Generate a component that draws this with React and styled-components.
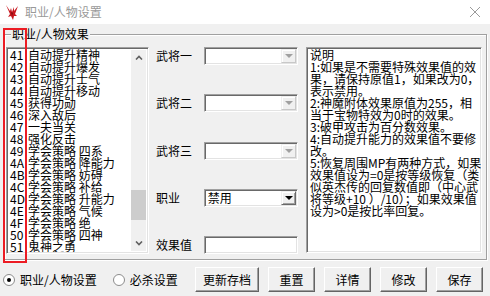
import React from 'react';
import styled, { createGlobalStyle } from 'styled-components';

const GlobalStyle = createGlobalStyle`
  html, body {
    margin: 0;
    padding: 0;
    background: #f0f0f0;
  }
  * {
    box-sizing: border-box;
  }
`;

const Window = styled.div`
  position: relative;
  width: 490px;
  height: 296px;
  background: #f0f0f0;
  display: flex;
  flex-direction: column;
  font-family: "Noto Sans CJK SC", "Liberation Sans", sans-serif;
  font-size: 12px;
  color: #000;
  overflow: hidden;
`;

const TitleBar = styled.div`
  height: 24px;
  background: #fff;
  display: flex;
  align-items: center;
  padding: 0 10px 0 5px;
`;

const TitleText = styled.span`
  margin-left: 6px;
  color: #999;
  font-size: 12px;
  line-height: 12px;
`;

const CloseButton = styled.span`
  margin-left: auto;
  display: flex;
`;

const Body = styled.div`
  flex: 1;
  padding: 10px 4px 0 4px;
  display: flex;
  flex-direction: column;
`;

const Group = styled.div`
  position: relative;
  height: 226px;
  width: 483px;
  border: 1px solid #a0a0a0;
  box-shadow: inset 1px 1px 0 #fff, 1px 1px 0 #fff;
  padding: 12px 3px 3px 1px;
  display: flex;
`;

const Legend = styled.span`
  position: absolute;
  top: -7px;
  left: 6px;
  padding: 0 1px;
  background: #f0f0f0;
  line-height: 12px;
`;

const sunken = `
  border-style: solid;
  border-width: 1px;
  border-color: #a0a0a0 #fff #fff #a0a0a0;
  box-shadow: inset 1px 1px 0 #696969, inset -1px -1px 0 #e3e3e3;
`;

const ListBox = styled.div`
  width: 143px;
  height: 207px;
  background: #fff;
  ${sunken}
  padding: 1px 2px 1px 2px;
  display: flex;
`;

const Items = styled.div`
  flex: 1;
  overflow: hidden;
  padding-left: 1px;
`;

const Item = styled.div`
  display: flex;
  height: 12px;
  line-height: 12px;
  white-space: pre;
`;

const ItemCode = styled.span`
  width: 18px;
  flex: none;
`;

const ScrollBar = styled.div`
  width: 15px;
  margin: 1px 0;
  background: #f0f0f0;
  display: flex;
  flex-direction: column;
  align-items: center;
`;

const ScrollArrow = styled.div`
  height: 15px;
  width: 100%;
  display: flex;
  align-items: center;
  justify-content: center;
`;

const ScrollTrack = styled.div`
  flex: 1;
  width: 100%;
`;

const ScrollThumb = styled.div`
  width: 100%;
  background: #cdcdcd;
`;

const FieldColumn = styled.div`
  margin-left: 7px;
  width: 142px;
  height: 207px;
  display: flex;
  flex-direction: column;
  justify-content: space-between;
`;

const FieldRow = styled.div`
  display: flex;
  align-items: center;
  height: 18px;
`;

const FieldLabel = styled.span`
  width: 48px;
  line-height: 12px;
`;

const Combo = styled.div`
  width: 95px;
  height: 18px;
  background: #fff;
  ${sunken}
  padding: 1px 1px 1px 3px;
  display: flex;
  align-items: center;
  line-height: 12px;
`;

const ComboValue = styled.span`
  flex: 1;
`;

const DropButton = styled.div`
  width: 15px;
  height: 14px;
  background: #f0f0f0;
  border-style: solid;
  border-width: 1px;
  border-color: ${p => (p.$disabled ? '#f0f0f0 #c8c8c8 #c8c8c8 #f0f0f0' : '#f0f0f0 #696969 #696969 #f0f0f0')};
  box-shadow: ${p => (p.$disabled ? 'inset 1px 1px 0 #fff' : 'inset 1px 1px 0 #fff, inset -1px -1px 0 #a0a0a0')};
  display: flex;
  align-items: center;
  justify-content: center;
`;

const Arrow = styled.span`
  width: 0;
  height: 0;
  border-left: 4px solid transparent;
  border-right: 4px solid transparent;
  border-top: 4px solid ${p => (p.$disabled ? '#a0a0a0' : '#000')};
`;

const TextBox = styled.div`
  width: 95px;
  height: 18px;
  background: #fff;
  ${sunken}
`;

const Memo = styled.div`
  margin-left: 8px;
  width: 176px;
  height: 206px;
  background: #fff;
  ${sunken}
  padding: 1px 2px 2px 3px;
  line-height: 12px;
  white-space: pre;
  overflow: hidden;
`;

const Footer = styled.div`
  margin-top: 7px;
  display: flex;
  align-items: center;
  height: 25px;
  padding-right: 3px;
  margin-left: -1px;
`;

const RadioLabel = styled.label`
  display: flex;
  align-items: center;
  margin-right: 16px;
  line-height: 12px;
`;

const RadioDot = styled.span`
  position: relative;
  width: 12px;
  height: 12px;
  border-radius: 50%;
  background: #fff;
  border: 1px solid #8c8c8c;
  margin-right: 5px;
  &::after {
    content: '';
    display: ${p => (p.$checked ? 'block' : 'none')};
    position: absolute;
    left: 3px;
    top: 3px;
    width: 4px;
    height: 4px;
    border-radius: 50%;
    background: #000;
  }
`;

const Buttons = styled.div`
  margin-left: auto;
  display: flex;
  gap: 9px;
`;

const Button = styled.div`
  width: ${p => p.$w || 47}px;
  height: 25px;
  background: #f0f0f0;
  border-style: solid;
  border-width: 1px;
  border-color: #fff #646464 #646464 #fff;
  box-shadow: inset -1px -1px 0 #a0a0a0;
  display: flex;
  align-items: center;
  justify-content: center;
  line-height: 12px;
`;

const RedMark = styled.div`
  position: absolute;
  left: 3px;
  top: 28px;
  width: 24px;
  height: 235px;
  border: 2px solid #ec1c24;
  pointer-events: none;
`;

const items = [
  ['41', '自动提升精神'],
  ['42', '自动提升爆发'],
  ['43', '自动提升士气'],
  ['44', '自动提升移动'],
  ['45', '获得功勋'],
  ['46', '深入敌后'],
  ['47', '一夫当关'],
  ['48', '强化反击'],
  ['49', '学会策略 四系'],
  ['4A', '学会策略 降能力'],
  ['4B', '学会策略 妨碍'],
  ['4C', '学会策略 补给'],
  ['4D', '学会策略 升能力'],
  ['4E', '学会策略 气候'],
  ['4F', '学会策略 绝'],
  ['50', '学会策略 四神'],
  ['51', '鬼神之勇'],
];

const note = [
  '说明',
  '1:如果是不需要特殊效果值的效',
  '果，请保持原值1，如果改为0，',
  '表示禁用。',
  '2:神魔附体效果原值为255，相',
  '当于宝物特效为0时的效果。',
  '3:破甲攻击为百分数效果。',
  '4:自动提升能力的效果值不要修',
  '改。',
  '5:恢复周围MP有两种方式，如果',
  '效果值设为=0是按等级恢复（类',
  '似英杰传的回复数值即（中心武',
  '将等级+10 ）/10）；如果效果值',
  '设为>0是按比率回复。',
].join('\n');

const Logo = () => (
  <svg width="14" height="17" viewBox="0 0 14 17">
    <path d="M1 1 L5 7 L6 4 L7 8 L9 3 L9 7 L13 2 L10 10 L12 12 L9 12 L8 16 L6 12 L3 13 L5 10 Z" fill="#c8161d" />
    <path d="M6 8 L8 9 L7 12 Z" fill="#7a0c10" />
  </svg>
);

const Chevron = ({ up }) => (
  <svg width="8" height="5" viewBox="0 0 8 5">
    <path d={up ? 'M1 4.5 L4 1.5 L7 4.5' : 'M1 0.5 L4 3.5 L7 0.5'} stroke="#606060" strokeWidth="1.6" fill="none" />
  </svg>
);

const ComboBox = ({ value, disabled }) => (
  <Combo>
    <ComboValue>{value}</ComboValue>
    <DropButton $disabled={disabled}>
      <Arrow $disabled={disabled} />
    </DropButton>
  </Combo>
);

export default function App() {
  return (
    <>
      <GlobalStyle />
      <Window>
        <TitleBar>
          <Logo />
          <TitleText>职业/人物设置</TitleText>
          <CloseButton>
            <svg width="10" height="10" viewBox="0 0 10 10">
              <path d="M0 0 L10 10 M10 0 L0 10" stroke="#9a9a9a" strokeWidth="1" />
            </svg>
          </CloseButton>
        </TitleBar>
        <Body>
          <Group>
            <Legend>职业/人物效果</Legend>
            <ListBox>
              <Items>
                {items.map(([code, name]) => (
                  <Item key={code}>
                    <ItemCode>{code}</ItemCode>
                    <span>{name}</span>
                  </Item>
                ))}
              </Items>
              <ScrollBar>
                <ScrollArrow><Chevron up /></ScrollArrow>
                <ScrollTrack>
                  <ScrollThumb style={{ marginTop: 125, height: 30 }} />
                </ScrollTrack>
                <ScrollArrow><Chevron /></ScrollArrow>
              </ScrollBar>
            </ListBox>
            <FieldColumn>
              <FieldRow>
                <FieldLabel>武将一</FieldLabel>
                <ComboBox disabled />
              </FieldRow>
              <FieldRow>
                <FieldLabel>武将二</FieldLabel>
                <ComboBox disabled />
              </FieldRow>
              <FieldRow>
                <FieldLabel>武将三</FieldLabel>
                <ComboBox disabled />
              </FieldRow>
              <FieldRow>
                <FieldLabel>职业</FieldLabel>
                <ComboBox value="禁用" />
              </FieldRow>
              <FieldRow>
                <FieldLabel>效果值</FieldLabel>
                <TextBox />
              </FieldRow>
            </FieldColumn>
            <Memo>{note}</Memo>
          </Group>
          <Footer>
            <RadioLabel>
              <RadioDot $checked />
              职业/人物设置
            </RadioLabel>
            <RadioLabel>
              <RadioDot />
              必杀设置
            </RadioLabel>
            <Buttons>
              <Button $w={64}>更新存档</Button>
              <Button>重置</Button>
              <Button>详情</Button>
              <Button>修改</Button>
              <Button>保存</Button>
            </Buttons>
          </Footer>
        </Body>
        <RedMark />
      </Window>
    </>
  );
}
